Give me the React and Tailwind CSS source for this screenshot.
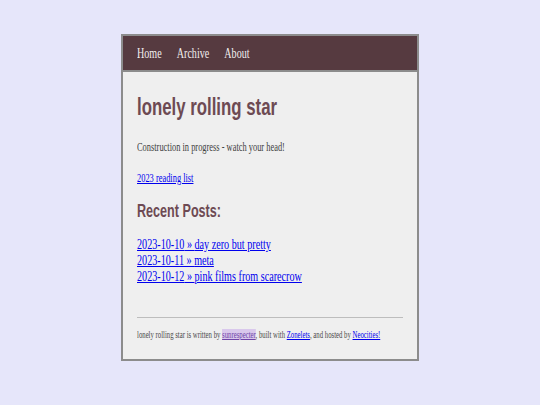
const posts = [
  { date: "2023-10-10", title: "day zero but pretty" },
  { date: "2023-10-11", title: "meta" },
  { date: "2023-10-12", title: "pink films from scarecrow" },
];

export default function App() {
  return (
    <div className="min-h-[405px] w-full bg-[#e6e6fa] pt-[34px] font-['Liberation_Serif',serif]">
      <div className="mx-auto w-[298px] border-2 border-[#8c8c8c] bg-[#efefef]">
        {/* Nav */}
        <nav className="flex h-[36px] items-center border-b-2 border-[#8c8c8c] bg-[#563a40] pl-[14px]">
          <div className="flex origin-left scale-x-[0.72] gap-[21px] text-[14px] text-[#f2eeee]">
            <a href="#">Home</a>
            <a href="#">Archive</a>
            <a href="#">About</a>
          </div>
        </nav>

        {/* Content */}
        <main className="px-[14px] pt-[21px] pb-[18px]">
          <h1 className="origin-left scale-x-[0.7] font-['Liberation_Sans',sans-serif] text-[24px] leading-[28px] font-bold text-[#6d4a53]">
            lonely rolling star
          </h1>
          <p className="mt-[18px] origin-left scale-x-[0.7] text-[12px] leading-[16px] text-[#3f3f3f]">
            Construction in progress - watch your head!
          </p>
          <p className="mt-[15px] origin-left scale-x-[0.7] text-[12px] leading-[16px]">
            <a href="#" className="text-[#0000ee] underline">2023 reading list</a>
          </p>

          <h2 className="mt-[14px] origin-left scale-x-[0.7] font-['Liberation_Sans',sans-serif] text-[18px] leading-[22px] font-bold text-[#6d4a53]">
            Recent Posts:
          </h2>
          <ul className="mt-[15px] origin-left scale-x-[0.725] text-[14px] leading-[16px]">
            {posts.map((p) => (
              <li key={p.date}>
                <a href="#" className="text-[#0000ee] underline">
                  {p.date} » {p.title}
                </a>
              </li>
            ))}
          </ul>

          <hr className="mt-[32px] border-t border-[#bdbdbd]" />

          <footer className="mt-[11px] origin-left scale-x-[0.675] whitespace-nowrap text-[10px] leading-[12px] text-[#4a4a4a]">
            lonely rolling star is written by{" "}
            <a href="#" className="bg-[#d9c8ec] text-[#6f44a8] underline">sunrespecter</a>, built with{" "}
            <a href="#" className="text-[#0000ee] underline">Zonelets</a>, and hosted by{" "}
            <a href="#" className="text-[#0000ee] underline">Neocities!</a>
          </footer>
        </main>
      </div>
    </div>
  );
}
